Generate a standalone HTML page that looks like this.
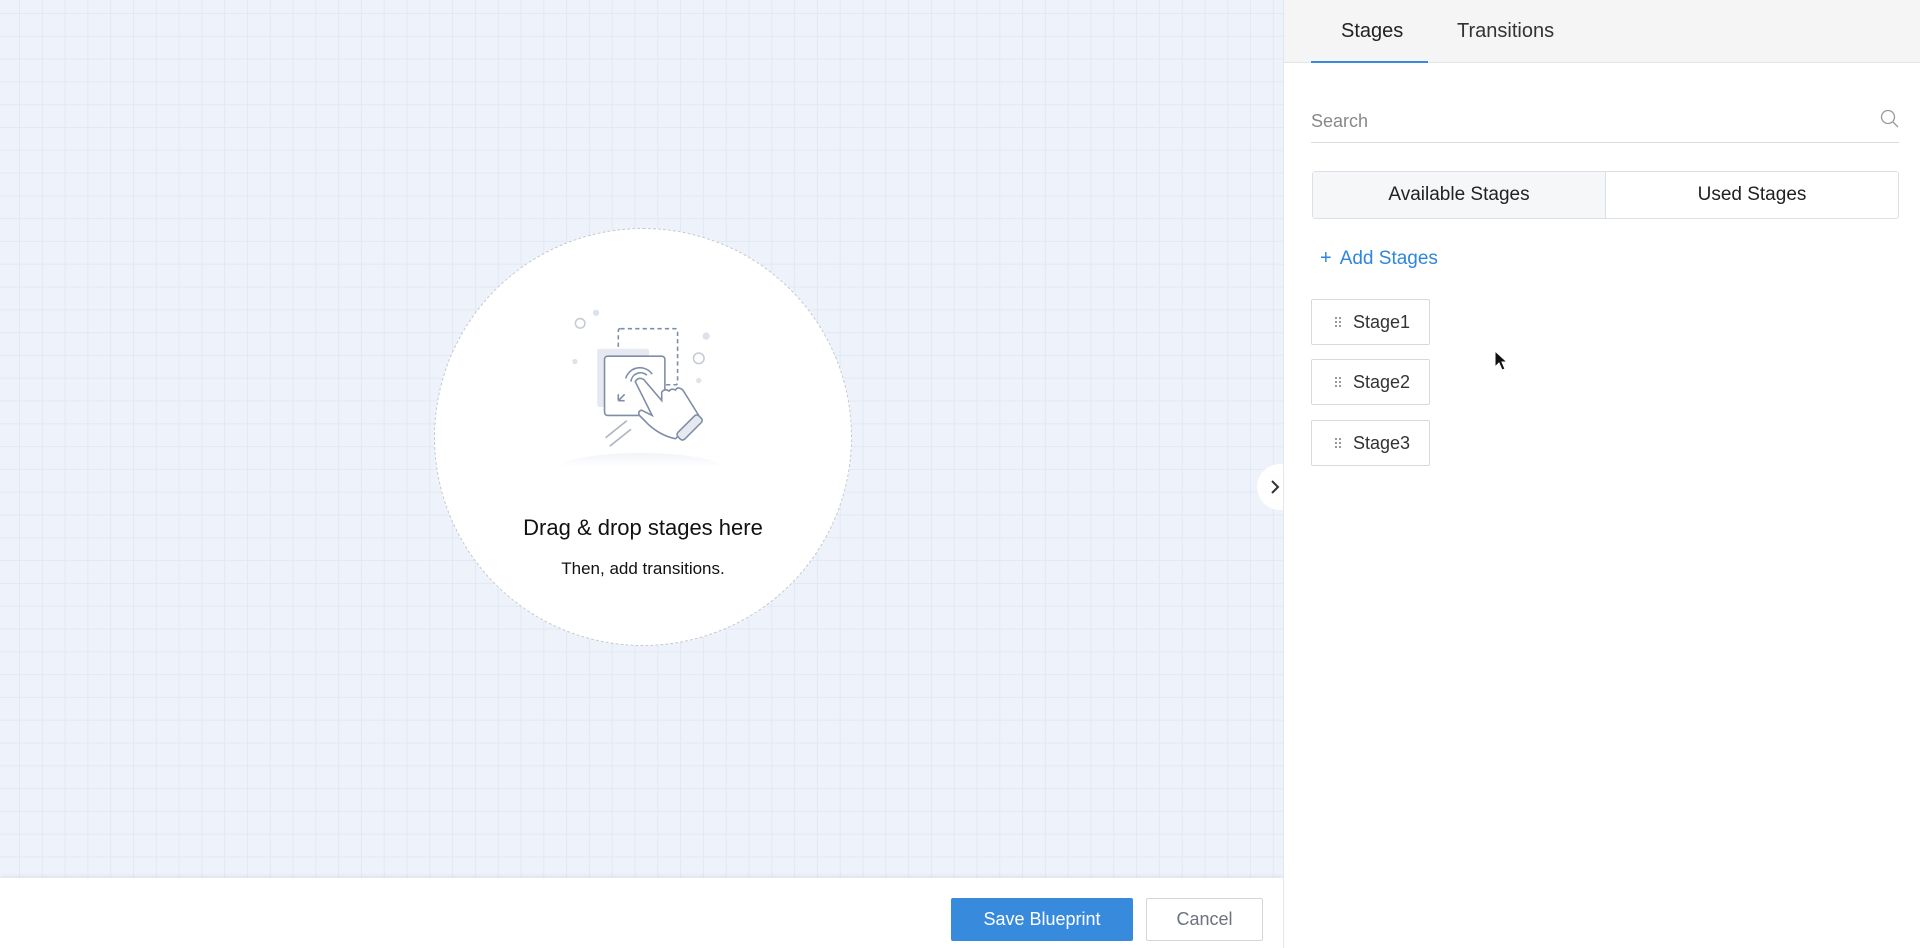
<!DOCTYPE html>
<html><head><meta charset="utf-8"><style>
*{box-sizing:border-box;margin:0;padding:0}
body{width:1920px;height:948px;overflow:hidden;font-family:"Liberation Sans",sans-serif;background:#fff;position:relative}
#canvas{position:absolute;left:0;top:0;width:1283px;height:878px;background-color:#edf2fb;
background-image:linear-gradient(to right,#e3e9f3 1px,transparent 1px),linear-gradient(to bottom,#e3e9f3 1px,transparent 1px);
background-size:22.8px 22.8px;background-position:19px 13px}
#footer{position:absolute;left:0;top:878px;width:1283px;height:70px;background:#fff;box-shadow:0 -2px 4px rgba(0,0,0,.06)}
.btn{position:absolute;top:20px;height:43px;border-radius:2px;font-size:18px;display:flex;align-items:center;justify-content:center}
#save{left:951px;width:182px;background:#388bdc;color:#fff}
#cancel{left:1146px;width:117px;border:1px solid #d3d6db;color:#6b7280;background:#fff}
#circle{position:absolute;left:434px;top:228px;width:418px;height:418px;border-radius:50%;background:#fff;border:1.5px dashed #c4c9d1}
.t1{position:absolute;left:0;width:100%;text-align:center;top:286px;font-size:22px;color:#111}
.t2{position:absolute;left:0;width:100%;text-align:center;top:330px;font-size:17px;color:#111}
#panel{position:absolute;left:1283px;top:0;width:637px;height:948px;background:#fff;border-left:1px solid #e3e6ea}
#tabs{position:absolute;left:0;top:0;width:100%;height:63px;background:#f5f5f5;border-bottom:1px solid #e3e6ea}
.tab{position:absolute;top:20px;font-size:20px;color:#222}
#uline{position:absolute;left:27px;top:61px;width:117px;height:2px;background:#3a8bdc}
#search{position:absolute;left:27px;top:111px;font-size:18px;color:#888}
#sline{position:absolute;left:27px;top:142px;width:588px;height:1px;background:#d9dcdf}
#seg{position:absolute;left:28px;top:171px;width:587px;height:48px;border:1px solid #dcdfe3;border-radius:3px;display:flex;font-size:19px;color:#222}
#seg div{flex:1;display:flex;align-items:center;justify-content:center}
#seg div:first-child{background:#f6f7f9;border-right:1px solid #dcdfe3}
#add{position:absolute;left:36px;top:247px;font-size:19px;color:#2f86dc}
.stage{position:absolute;left:27px;width:119px;height:46px;border:1px solid #d6d9dd;border-radius:2px;font-size:18px;color:#333;padding-left:41px;line-height:44px}
.stage:before{content:"";position:absolute;left:23px;top:17px;width:2px;height:2px;background:#999;box-shadow:4px 0 #999,0 4px #999,4px 4px #999,0 8px #999,4px 8px #999}
#toggle{position:absolute;left:1257px;top:464px;width:46px;height:46px;border-radius:50%;background:#fff}
</style></head><body>
<div id="canvas"></div>
<div id="circle">
<svg style="position:absolute;left:124px;top:52px" width="180" height="180" viewBox="0 0 170 170" fill="none" stroke="#7f8ea6" stroke-width="1.5">
<circle cx="20" cy="40" r="4.5" stroke="#c5ccd6"/><circle cx="35" cy="30" r="3" fill="#dde3ea" stroke="none"/>
<circle cx="15" cy="76" r="2.5" fill="#dde3ea" stroke="none"/><circle cx="139" cy="52" r="3.5" fill="#dde3ea" stroke="none"/>
<circle cx="132" cy="73" r="5" stroke="#c5ccd6"/><circle cx="132" cy="94" r="2.5" fill="#dde3ea" stroke="none"/>
<rect x="56" y="45" width="56" height="53" rx="2" stroke-dasharray="4 3"/>
<rect x="36" y="64" width="49" height="55" rx="2" fill="#e6eaf0" stroke="none"/>
<rect x="43" y="71" width="57" height="56" rx="3" fill="#fff"/>
<path d="M62 107 L56 113 M56 113 L56 107 M56 113 L62 113"/>
<path d="M63 92 a14 14 0 0 1 25 -4 M68 95 a9 9 0 0 1 15 -6"/>
<path d="M72 95 q3 -5 8 -2 l17 20 l0 -8 q3 -4 7 -1 q2 -3 6 -1 q2 -4 7 0 l15 24 l-22 22 q-14 -3 -25 -13 l-9 -9 q-2 -4 2 -5 l10 5 z" fill="#fff"/>
<rect x="119" y="124" width="9" height="28" rx="3" transform="rotate(45 123 138)" fill="#e6eaf0"/>
<path d="M48 156 l20 -16 M44 148 l20 -16" stroke="#aab4c4"/>
</svg>
<div style="position:absolute;left:126px;top:224px;width:160px;height:14px;border-radius:50%/100% 100% 0 0;background:linear-gradient(#f1f4f8,#fff)"></div>
<div class="t1">Drag &amp; drop stages here</div>
<div class="t2">Then, add transitions.</div>
</div>
<div id="footer"><div class="btn" id="save">Save Blueprint</div><div class="btn" id="cancel">Cancel</div></div>
<div id="toggle"><svg style="position:absolute;left:12px;top:15px" width="12" height="16" viewBox="0 0 12 16"><path d="M3 2 L9 8 L3 14" fill="none" stroke="#333" stroke-width="2"/></svg></div>
<div id="panel">
<div id="tabs"><div class="tab" style="left:57px">Stages</div><div class="tab" style="left:173px;color:#333">Transitions</div><div id="uline"></div></div>
<div id="search">Search</div>
<svg style="position:absolute;left:596px;top:109px" width="20" height="20" viewBox="0 0 20 20" fill="none" stroke="#999" stroke-width="1.3"><circle cx="8" cy="8" r="6.5"/><path d="M13 13 L18 18"/></svg>
<div id="sline"></div>
<div id="seg"><div>Available Stages</div><div>Used Stages</div></div>
<div id="add"><span style="font-size:20px;margin-right:8px">+</span>Add Stages</div>
<div class="stage" style="top:299px">Stage1</div>
<div class="stage" style="top:359px">Stage2</div>
<div class="stage" style="top:420px">Stage3</div>
<svg style="position:absolute;left:210px;top:350px" width="16" height="24" viewBox="0 0 16 24"><path d="M1 1 L1 17 L5 13 L8 20 L11 19 L8 12 L13 12 Z" fill="#111" stroke="#fff" stroke-width="1"/></svg>
</div>
</body></html>
